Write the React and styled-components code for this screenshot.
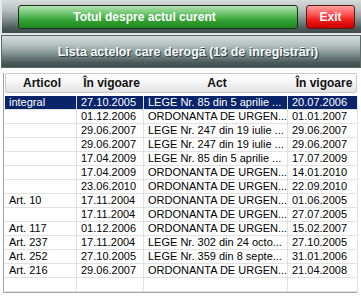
import React from 'react';
import styled, { createGlobalStyle } from 'styled-components';

const Global = createGlobalStyle`
  html, body { margin: 0; padding: 0; background: #fff; }
  body { font-family: "Liberation Sans", Arial, sans-serif; font-size: 11px; color: #000; }
`;

const Page = styled.div`
  width: 361px;
  height: 299px;
  overflow: hidden;
  background: #fff;
  display: flex;
  flex-direction: column;
`;

const TopBar = styled.div`
  height: 35px;
  box-sizing: border-box;
  display: flex;
  align-items: flex-start;
  gap: 8px;
  padding: 5px 5px 0 18px;
  border-bottom: 2px solid #e2e6e6;
  background: linear-gradient(#d6dbdb 0%, #b9c1c1 30%, #808d8d 60%, #4d5b5b 85%, #3f4b4b 100%);
  box-shadow: inset 2px 0 0 #e4e8e8;
`;

const Button = styled.button`
  height: 24px;
  box-sizing: border-box;
  border: 1px solid ${p => (p.$red ? '#5a1818' : '#1e2e1e')};
  border-radius: 3px;
  padding: 0 ${p => p.$shift || 0}px 0 0;
  font-family: "Liberation Sans", Arial, sans-serif;
  font-weight: bold;
  font-size: 12px;
  color: #fff;
  display: flex;
  align-items: center;
  justify-content: center;
  width: ${p => p.$w}px;
  background: ${p =>
    p.$red
      ? 'linear-gradient(#ffa0a0 0%, #ff5a5a 35%, #f01a1a 65%, #c80000 100%)'
      : 'linear-gradient(#b4e2b4 0%, #6cc46c 35%, #34a234 65%, #1f861f 100%)'};
`;

const TitleBar = styled.div`
  height: 33px;
  box-sizing: border-box;
  margin-left: 1px;
  padding-left: 14px;
  border: 1px solid #5d6969;
  display: flex;
  align-items: center;
  justify-content: center;
  color: #f2fafa;
  font-weight: bold;
  font-size: 12.5px;
  text-shadow: 1px 1px 0 #2f3c3c;
  background: linear-gradient(#d4dbdb 0%, #b4c0c0 30%, #80908f 58%, #4c5c5c 85%, #3e4c4c 100%);
`;

const Frame = styled.div`
  margin: 5px 4px 0 3px;
  border-left: 1px solid #a4a4a4;
  border-bottom: 1px solid #a4a4a4;
  padding-left: 1px;
  display: flex;
  flex-direction: column;
`;

const HeaderRow = styled.div`
  display: grid;
  grid-template-columns: 72px 67px 144px 70px;
  height: 20px;
  box-sizing: border-box;
  border: 1px solid #c9c9c9;
  border-radius: 2px;
  background: linear-gradient(#ffffff 0%, #f4f4f4 50%, #e2e2e2 100%);
  margin-bottom: 3px;
`;

const HeadCell = styled.div`
  display: flex;
  align-items: center;
  justify-content: center;
  font-weight: bold;
  font-size: 12px;
  color: #111;
`;

const Row = styled.div`
  display: grid;
  grid-template-columns: 72px 67px 144px 70px;
  height: 14px;
  background: ${p => (p.$selected ? '#0a246a' : 'transparent')};
  color: ${p => (p.$selected ? '#fff' : '#000')};
`;

const Cell = styled.div`
  box-sizing: border-box;
  border-right: 1px solid #e2e2e2;
  border-bottom: 1px solid #e2e2e2;
  padding-left: 4px;
  line-height: 13px;
  white-space: nowrap;
  overflow: hidden;
`;

const rows = [
  ['integral', '27.10.2005', 'LEGE Nr. 85 din 5 aprilie ...', '20.07.2006'],
  ['', '01.12.2006', 'ORDONANTA DE URGEN...', '01.01.2007'],
  ['', '29.06.2007', 'LEGE Nr. 247 din 19 iulie ...', '29.06.2007'],
  ['', '29.06.2007', 'LEGE Nr. 247 din 19 iulie ...', '29.06.2007'],
  ['', '17.04.2009', 'LEGE Nr. 85 din 5 aprilie ...', '17.07.2009'],
  ['', '17.04.2009', 'ORDONANTA DE URGEN...', '14.01.2010'],
  ['', '23.06.2010', 'ORDONANTA DE URGEN...', '22.09.2010'],
  ['Art. 10', '17.11.2004', 'ORDONANTA DE URGEN...', '01.06.2005'],
  ['', '17.11.2004', 'ORDONANTA DE URGEN...', '27.07.2005'],
  ['Art. 117', '01.12.2006', 'ORDONANTA DE URGEN...', '15.02.2007'],
  ['Art. 237', '17.11.2004', 'LEGE Nr. 302 din 24 octo...', '27.10.2005'],
  ['Art. 252', '27.10.2005', 'LEGE Nr. 359 din 8 septe...', '31.01.2006'],
  ['Art. 216', '29.06.2007', 'ORDONANTA DE URGEN...', '21.04.2008'],
  ['', '', '', ''],
];

export default function App() {
  return (
    <Page>
      <Global />
      <TopBar>
        <Button $w={280} $shift={27}>Totul despre actul curent</Button>
        <Button $w={49} $red>Exit</Button>
      </TopBar>
      <TitleBar>Lista actelor care derogă (13 de inregistrări)</TitleBar>
      <Frame>
        <HeaderRow>
          <HeadCell>Articol</HeadCell>
          <HeadCell>În vigoare</HeadCell>
          <HeadCell>Act</HeadCell>
          <HeadCell>În vigoare</HeadCell>
        </HeaderRow>
        {rows.map((r, i) => (
          <Row key={i} $selected={i === 0}>
            {r.map((c, j) => (
              <Cell key={j}>{c}</Cell>
            ))}
          </Row>
        ))}
      </Frame>
    </Page>
  );
}
